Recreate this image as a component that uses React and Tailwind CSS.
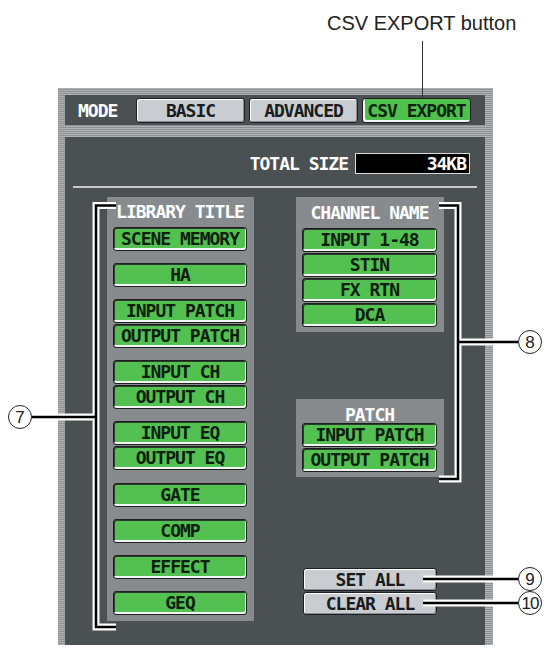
const mono = "font-['DejaVu_Sans_Mono',monospace] font-bold text-[18px] leading-[20px] tracking-[-1px]";

function G({ children, w = "w-[134px]" }) {
  return (
    <div className={`h-[24px] ${w} flex items-center justify-center rounded-[3px] border border-[#1c201c] bg-[#52c152] shadow-[inset_-1px_-2px_0_#f4f4f4,inset_1px_1px_0_#2e3a2e] text-[#0e200e] ${mono}`}>
      {children}
    </div>
  );
}

function GrayBtn({ children, h = "h-[25px]", w = "w-[109px]" }) {
  return (
    <div className={`${h} ${w} flex items-center justify-center rounded-[3px] border border-[#1d2022] bg-[#c9cdd1] shadow-[inset_1px_1px_0_#ffffff,inset_-1px_-1px_0_#8a8e92] text-[#1a1c1e] ${mono}`}>
      {children}
    </div>
  );
}

function Circle({ n, className }) {
  return (
    <div className={`absolute w-[24px] h-[24px] rounded-full border border-[#222] bg-white flex items-center justify-center text-[17px] leading-none text-[#222] font-['Liberation_Sans',Arial,sans-serif] ${className}`}>
      {n}
    </div>
  );
}

export default function App() {
  return (
    <div className="relative w-[548px] h-[650px] bg-white overflow-hidden">
      <div className="pt-[12px] pl-[327px] text-[20px] leading-[23px] text-[#222] font-['Liberation_Sans',Arial,sans-serif]">
        CSV EXPORT button
      </div>

      <div className="mt-[53px] ml-[58px] w-[435px] h-[557px] pt-[7px] pl-[7px] pr-[8px] flex flex-col gap-[12px] bg-[repeating-linear-gradient(180deg,#aeb2b4_0px,#aeb2b4_1px,#8e9294_1px,#8e9294_2px)]">
        <div className="h-[30px] bg-[#4b5052] flex items-start pt-[3px] pl-[13px]">
          <div className={`h-[25px] w-[58px] flex items-center text-white ${mono}`}>MODE</div>
          <div className="flex gap-[4px]">
            <GrayBtn>BASIC</GrayBtn>
            <GrayBtn>ADVANCED</GrayBtn>
            <div className={`h-[25px] w-[109px] flex items-center justify-center rounded-[3px] border border-[#1d2022] bg-[#4fc04c] shadow-[inset_2px_-2px_0_#f4f4f4] text-[#0f240f] ${mono}`}>
              CSV EXPORT
            </div>
          </div>
        </div>

        <div className="flex-1 bg-[#4b5052] flex flex-col">
          <div className="mt-[16px] h-[21px] flex justify-end items-center pr-[15px]">
            <div className={`text-white ${mono}`}>TOTAL SIZE</div>
            <div className={`ml-[7px] w-[115px] h-[21px] bg-black border border-[#d8dadb] flex items-center justify-end pr-[3px] text-white ${mono}`}>
              34KB
            </div>
          </div>
          <div className="mt-[12px] mx-[8px] h-[2px] bg-[#c4c8c9]" />

          <div className="mt-[9px] flex items-start pl-[42px] gap-[42px]">
            <div className="w-[147px] h-[424px] bg-[#878b8e] pt-[5px] pl-[6px] flex flex-col">
              <div className={`h-[20px] w-[134px] text-center text-white ${mono}`}>LIBRARY TITLE</div>
              <div className="mt-[5px] flex flex-col">
                <G>SCENE MEMORY</G>
                <div className="mt-[12px]"><G>HA</G></div>
                <div className="mt-[12px] flex flex-col gap-[1px]">
                  <G>INPUT PATCH</G>
                  <G>OUTPUT PATCH</G>
                </div>
                <div className="mt-[12px] flex flex-col gap-[1px]">
                  <G>INPUT CH</G>
                  <G>OUTPUT CH</G>
                </div>
                <div className="mt-[12px] flex flex-col gap-[1px]">
                  <G>INPUT EQ</G>
                  <G>OUTPUT EQ</G>
                </div>
                <div className="mt-[13px]"><G>GATE</G></div>
                <div className="mt-[12px]"><G>COMP</G></div>
                <div className="mt-[12px]"><G>EFFECT</G></div>
                <div className="mt-[12px]"><G>GEQ</G></div>
              </div>
            </div>

            <div className="w-[148px] flex flex-col">
              <div className="h-[135px] bg-[#878b8e] pt-[6px] pl-[6px] flex flex-col">
                <div className={`h-[20px] w-[135px] text-center text-white ${mono}`}>CHANNEL NAME</div>
                <div className="mt-[5px] flex flex-col gap-[1px]">
                  <G w="w-[135px]">INPUT 1-48</G>
                  <G w="w-[135px]">STIN</G>
                  <G w="w-[135px]">FX RTN</G>
                  <G w="w-[135px]">DCA</G>
                </div>
              </div>

              <div className="mt-[67px] h-[78px] bg-[#878b8e] pt-[6px] pl-[6px] flex flex-col">
                <div className={`h-[18px] w-[135px] text-center text-white ${mono} leading-[18px]`}>PATCH</div>
                <div className="flex flex-col gap-[1px]">
                  <G w="w-[135px]">INPUT PATCH</G>
                  <G w="w-[135px]">OUTPUT PATCH</G>
                </div>
              </div>

              <div className="mt-[91px] ml-[7px] flex flex-col gap-[1px]">
                <GrayBtn h="h-[23px]" w="w-[134px]">SET ALL</GrayBtn>
                <GrayBtn h="h-[23px]" w="w-[134px]">CLEAR ALL</GrayBtn>
              </div>
            </div>
          </div>
        </div>
      </div>

      <div className="absolute left-[422px] top-[41px] w-px h-[57px] bg-[#333]" />
      <svg className="absolute left-0 top-0 pointer-events-none" width="548" height="650" viewBox="0 0 548 650">
        <g fill="none" stroke="#ffffff" strokeWidth="7">
          <polyline points="116,205.5 96,205.5 96,627 116,627" />
          <line x1="32" y1="417" x2="96" y2="417" />
          <polyline points="439,205.5 458,205.5 458,479 439,479" />
          <line x1="458" y1="342" x2="518" y2="342" />
          <line x1="423" y1="579" x2="518" y2="579" />
          <line x1="423" y1="603" x2="518" y2="603" />
        </g>
        <g fill="none" stroke="#000000" strokeWidth="2.5">
          <polyline points="116,205.5 96,205.5 96,627 116,627" />
          <line x1="32" y1="417" x2="96" y2="417" />
          <polyline points="439,205.5 458,205.5 458,479 439,479" />
          <line x1="458" y1="342" x2="518" y2="342" />
          <line x1="423" y1="579" x2="518" y2="579" />
          <line x1="423" y1="603" x2="518" y2="603" />
        </g>
      </svg>
      <Circle n="7" className="left-[8px] top-[405px]" />
      <Circle n="8" className="left-[518px] top-[330px]" />
      <Circle n="9" className="left-[518px] top-[567px]" />
      <Circle n="10" className="left-[518px] top-[591px] tracking-[-1px]" />
    </div>
  );
}
